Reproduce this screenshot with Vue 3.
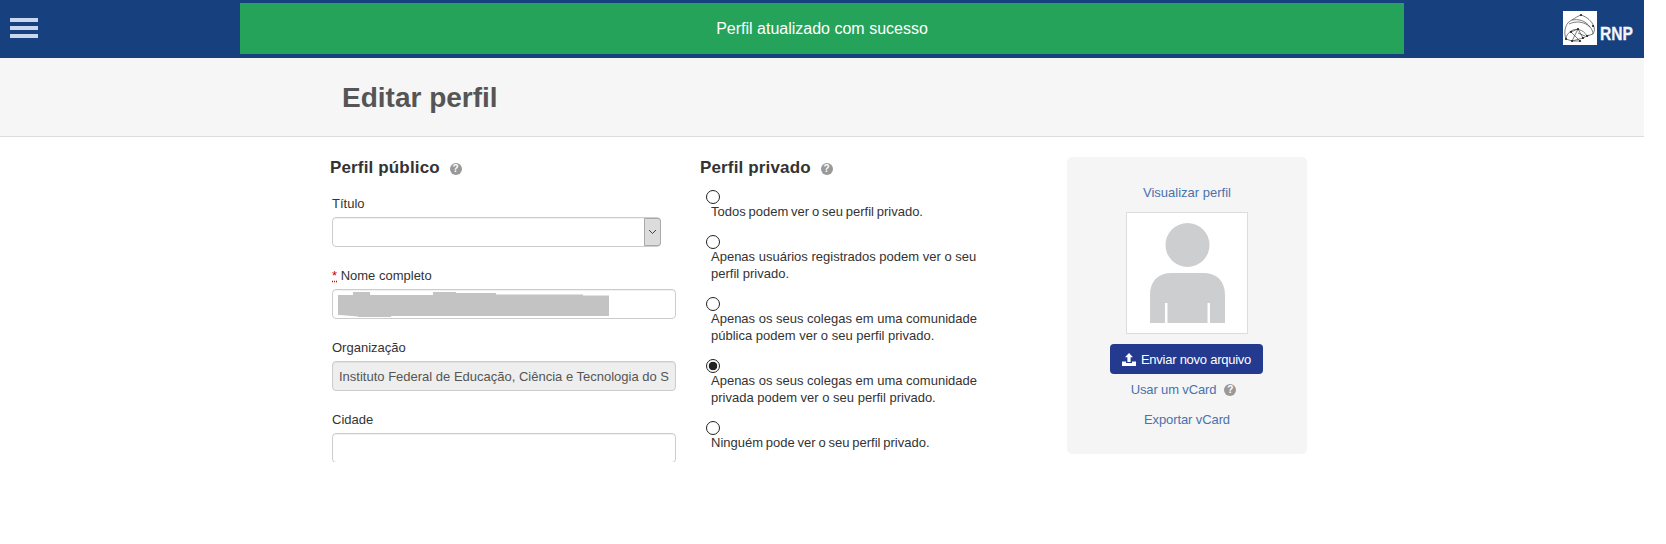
<script setup>
const options = [
  { text: 'Todos podem ver o seu perfil privado.', checked: false, tight: true },
  { text: 'Apenas usuários registrados podem ver o seu perfil privado.', checked: false },
  { text: 'Apenas os seus colegas em uma comunidade pública podem ver o seu perfil privado.', checked: false },
  { text: 'Apenas os seus colegas em uma comunidade privada podem ver o seu perfil privado.', checked: true },
  { text: 'Ninguém pode ver o seu perfil privado.', checked: false, tight: true }
]
</script>

<template>
  <div class="page">
    <header class="topbar">
      <button class="burger" aria-label="Menu"><i></i><i></i><i></i></button>
      <div class="banner">Perfil atualizado com sucesso</div>
      <div class="brand">
        <svg class="globe" width="34" height="34" viewBox="0 0 34 34">
          <rect width="34" height="34" fill="#fff" />
          <g fill="none" stroke="#444" stroke-width="0.7">
            <path d="M3 28C0 20 3 11 9 9c3-2 6-4 9-5 6 2 11 6 13 12 1 3 0 5 -1 7" />
            <path d="M6 13c6-3 15-3 21 3 2 2 3 5 3 7l-6 2" />
            <path d="M9 9c6-1 13 0 18 7" />
            <path d="M3 28c0-3 2-6 5-8 5-3 12-2 16 5" />
            <path d="M8 21l7-3 5 9 6-3" />
            <path d="M8 21l9 9M15 18l-6 12 11-3" />
            <path d="M3 28l6 2 8 0M15 22l7 3" />
          </g>
          <g fill="#222">
            <circle cx="18" cy="4" r="1.1" /><circle cx="8" cy="21" r="1.1" /><circle cx="15" cy="18" r="1.1" />
            <circle cx="20" cy="27" r="1.1" /><circle cx="9" cy="30" r="1.1" /><circle cx="30" cy="15" r="1.1" />
            <circle cx="24" cy="25" r="1.1" /><circle cx="3" cy="28" r="1.1" /><circle cx="17" cy="30" r="1.1" />
          </g>
        </svg>
        <span class="rnp">RNP</span>
      </div>
    </header>

    <section class="titlebar">
      <h1>Editar perfil</h1>
    </section>

    <main class="content">
      <div class="col public">
        <h2>Perfil público <span class="help">?</span></h2>
        <div class="field">
          <label>Título</label>
          <div class="select-wrap">
            <select class="control"><option></option></select>
            <span class="arrow">
              <svg width="9" height="6" viewBox="0 0 9 6"><path d="M1 1l3.5 3.5L8 1" fill="none" stroke="#444" stroke-width="1" /></svg>
            </span>
          </div>
        </div>
        <div class="field">
          <label><span class="req">*</span> Nome completo</label>
          <div class="redacted-wrap">
            <input class="control wide" type="text" />
            <svg class="redact" width="271" height="26" viewBox="0 0 271 26">
              <path d="M0 4h15V1h17v3h63V1h23v1h40v1.5h87v1h26V25H53v1H20v-.5L2 24H0z" fill="#c3c3c3" />
            </svg>
          </div>
        </div>
        <div class="field">
          <label>Organização</label>
          <input class="control wide disabled" type="text" disabled value="Instituto Federal de Educação, Ciência e Tecnologia do Sul" />
        </div>
        <div class="field">
          <label>Cidade</label>
          <input class="control wide" type="text" />
        </div>
      </div>

      <div class="col private">
        <h2>Perfil privado <span class="help">?</span></h2>
        <label v-for="o in options" :key="o.text" class="option" :class="{ tight: o.tight }">
          <input type="radio" name="privacy" :checked="o.checked" />
          <span>{{ o.text }}</span>
        </label>
      </div>

      <aside class="card">
        <a class="link" href="#">Visualizar perfil</a>
        <div class="avatar">
          <svg width="75" height="100" viewBox="0 0 75 100">
            <circle cx="37.5" cy="22" r="22" fill="#ccced0" />
            <path d="M0 100V72c0-14 8-22 22-22h31c14 0 22 8 22 22v28H60V80h-2.500v20h-40V80H15v20z" fill="#ccced0" />
          </svg>
        </div>
        <button class="upload">
          <svg width="14" height="13" viewBox="0 0 14 13">
            <path d="M7 0l4 4.2H8.600V9H5.400V4.200H3zM0 8.500h4V10h6V8.500h4V13H0z" fill="#fff" />
          </svg>
          Enviar novo arquivo
        </button>
        <div class="vcard"><a class="link" href="#">Usar um vCard</a><span class="help big">?</span></div>
        <a class="link export" href="#">Exportar vCard</a>
      </aside>
    </main>
  </div>
</template>

<style scoped>
.page {
  width: 1644px;
  height: 544px;
  overflow: hidden;
  font-family: "Liberation Sans", Arial, sans-serif;
  font-size: 13px;
  color: #333;
  background: #fff;
}
.topbar {
  height: 58px;
  background: #16407e;
  display: flex;
  align-items: flex-start;
}
.burger {
  width: 240px;
  height: 58px;
  padding: 18px 0 0 10px;
  border: 0;
  background: none;
  display: flex;
  flex-direction: column;
  gap: 4.5px;
}
.burger i {
  display: block;
  width: 28px;
  height: 3.500px;
  background: #c9d8ee;
}
.banner {
  width: 1164px;
  height: 51px;
  margin-top: 3px;
  background: #25a35a;
  color: #fff;
  font-size: 16px;
  display: flex;
  align-items: center;
  justify-content: center;
}
.brand {
  flex: 1;
  display: flex;
  align-items: flex-end;
  padding: 11px 0 0 159px;
  gap: 3px;
}
.globe { display: block; flex: none; }
.rnp {
  display: inline-block;
  font-weight: 700;
  font-size: 19px;
  line-height: 20px;
  color: #f2f6fb;
  -webkit-text-stroke: 0.3px #f2f6fb;
  margin-bottom: 1px;
  transform: scaleX(0.82);
  transform-origin: left center;
}
.titlebar {
  height: 78px;
  box-sizing: content-box;
  background: #f6f6f6;
  border-bottom: 1px solid #ddd;
  padding-left: 342px;
  display: flex;
  align-items: center;
}
h1 {
  margin: 2px 0 0;
  font-size: 28px;
  font-weight: 700;
  color: #555;
}
.content {
  display: flex;
  align-items: flex-start;
  padding: 20px 0 0 330px;
  height: 325px;
  overflow: hidden;
}
.col h2 {
  margin: 0;
  font-size: 17px;
  line-height: 22px;
  font-weight: 700;
  letter-spacing: 0.15px;
  color: #333;
}
.help {
  display: inline-block;
  width: 12px;
  height: 12px;
  margin-left: 5px;
  border-radius: 50%;
  background: #999;
  color: #fff;
  font-size: 10px;
  font-weight: 700;
  line-height: 12px;
  letter-spacing: 0;
  text-align: center;
  vertical-align: 1px;
}
.public { width: 370px; height: 305px; overflow: hidden; }
.field { padding-left: 2px; margin-top: 20px; }
.public h2 + .field { margin-top: 16px; }
.field label {
  display: block;
  height: 18px;
  line-height: 18px;
  margin-bottom: 4px;
}
.req { color: #c00; text-decoration: underline dotted; }
.control {
  display: block;
  box-sizing: border-box;
  height: 30px;
  border: 1px solid #ccc;
  border-radius: 4px;
  background: #fff;
  padding: 0 6px;
  font: 13px "Liberation Sans", Arial, sans-serif;
  color: #555;
  box-shadow: inset 0 1px 1px rgba(0,0,0,.06);
  outline: 0;
}
.select-wrap { position: relative; width: 329px; }
.select-wrap select { width: 329px; appearance: none; }
.arrow {
  position: absolute;
  right: 0;
  top: 1px;
  width: 17px;
  height: 28px;
  box-sizing: border-box;
  background: #dcdcdc;
  border: 1px solid #aaa;
  border-radius: 0 3px 3px 0;
  display: flex;
  align-items: center;
  justify-content: center;
}
.wide { width: 344px; }
.disabled { background: #eee; }
.redacted-wrap { position: relative; width: 344px; }
.redact { position: absolute; left: 6px; top: 2px; }
.private { width: 367px; }
.option {
  display: block;
  width: 280px;
  margin: 15px 0 0 6px;
  line-height: 17px;
  color: #333;
}
.option.tight { word-spacing: -0.8px; }
.private h2 + .option { margin-top: 11px; }
.option input {
  appearance: none;
  display: block;
  box-sizing: border-box;
  width: 14px;
  height: 14px;
  margin: 0;
  border: 1px solid #222;
  border-radius: 50%;
  background: #fff;
}
.option input:checked {
  background: radial-gradient(circle, #222 0 4px, #fff 4.6px);
}
.option span { display: block; padding-left: 5px; margin-top: -1px; }
.card {
  box-sizing: border-box;
  width: 240px;
  height: 297px;
  background: #f5f5f6;
  border-radius: 5px;
  display: flex;
  flex-direction: column;
  align-items: center;
  padding-top: 27px;
}
.link { color: #4a72ad; text-decoration: none; line-height: 18px; }
.avatar {
  box-sizing: border-box;
  width: 122px;
  height: 122px;
  margin-top: 10px;
  border: 1px solid #ddd;
  background: #fff;
  display: flex;
  justify-content: center;
  align-items: flex-end;
  padding-bottom: 10px;
}
.avatar svg { display: block; }
.upload {
  margin: 10px 0 0 -1px;
  width: 153px;
  height: 30px;
  border: 0;
  border-radius: 4px;
  background: #233a8e;
  color: #fff;
  font: 13px "Liberation Sans", Arial, sans-serif;
  letter-spacing: -0.25px;
  display: flex;
  align-items: center;
  justify-content: center;
  gap: 5px;
  padding: 0;
}
.vcard { margin: 7px 0 0 -7px; display: flex; align-items: center; letter-spacing: -0.15px; }
.help.big { margin-left: 8px; }
.export { margin-top: 12px; letter-spacing: -0.1px; }
</style>
